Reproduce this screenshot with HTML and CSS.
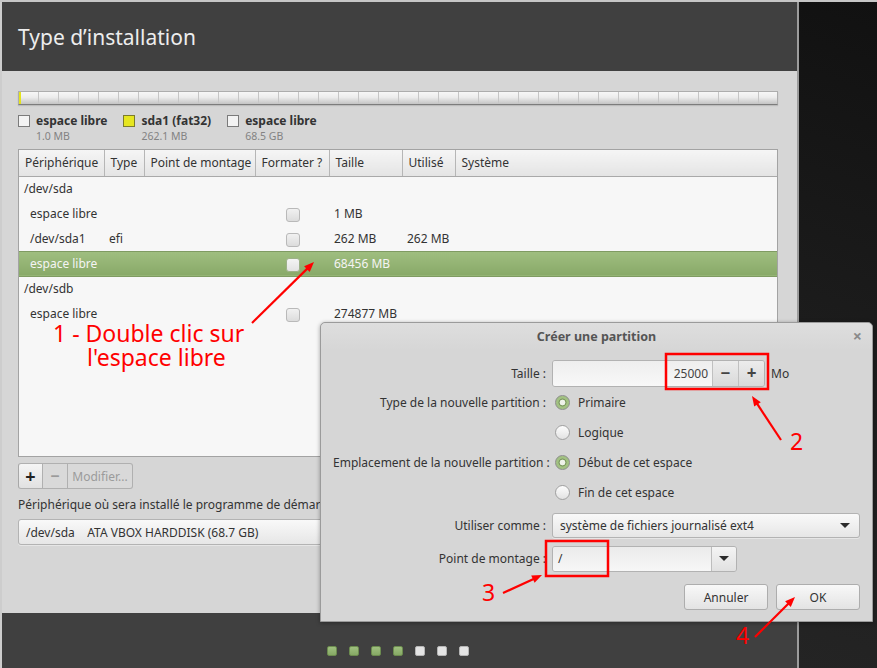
FILE: index.html
```html
<!DOCTYPE html>
<html lang="fr">
<head>
  <meta charset="UTF-8">
  <title>Type d'installation</title>
  <link rel="stylesheet" href="styles.css">
</head>
<body>
  <div class="screen">
    <div class="installer">
      <header class="top">
        <h1>Type d’installation</h1>
      </header>

      <main class="content">
        <div class="partbar"><span class="seg-fat"></span></div>

        <div class="legend">
          <div class="legend-item">
            <span class="swatch"></span>
            <div><b>espace libre</b><small>1.0 MB</small></div>
          </div>
          <div class="legend-item">
            <span class="swatch fat"></span>
            <div><b>sda1 (fat32)</b><small>262.1 MB</small></div>
          </div>
          <div class="legend-item">
            <span class="swatch"></span>
            <div><b>espace libre</b><small>68.5 GB</small></div>
          </div>
        </div>

        <div class="tree">
          <table>
            <colgroup>
              <col class="c-dev"><col class="c-type"><col class="c-mount"><col class="c-fmt">
              <col class="c-size"><col class="c-used"><col>
            </colgroup>
            <thead>
              <tr>
                <th>Périphérique</th><th>Type</th><th>Point de montage</th><th>Formater ?</th>
                <th>Taille</th><th>Utilisé</th><th>Système</th>
              </tr>
            </thead>
            <tbody>
              <tr class="disk"><td colspan="7">/dev/sda</td></tr>
              <tr>
                <td class="part">espace libre</td><td></td><td></td>
                <td class="fmt"><span class="check"></span></td><td>1 MB</td><td></td><td></td>
              </tr>
              <tr>
                <td class="part">/dev/sda1</td><td>efi</td><td></td>
                <td class="fmt"><span class="check"></span></td><td>262 MB</td><td>262 MB</td><td></td>
              </tr>
              <tr class="selected">
                <td class="part">espace libre</td><td></td><td></td>
                <td class="fmt"><span class="check"></span></td><td>68456 MB</td><td></td><td></td>
              </tr>
              <tr class="disk"><td colspan="7">/dev/sdb</td></tr>
              <tr>
                <td class="part">espace libre</td><td></td><td></td>
                <td class="fmt"><span class="check"></span></td><td>274877 MB</td><td></td><td></td>
              </tr>
            </tbody>
          </table>
        </div>

        <div class="tools">
          <button class="tool add">+</button><button class="tool minus" disabled>−</button><button class="tool edit" disabled>Modifier...</button>
        </div>

        <p class="boot-label">Périphérique où sera installé le programme de démarrage :</p>
        <div class="combo boot">
          <span class="combo-text">/dev/sda    ATA VBOX HARDDISK (68.7 GB)</span>
          <i class="caret"></i>
        </div>
      </main>

      <footer class="steps">
        <span class="dot done"></span>
        <span class="dot done"></span>
        <span class="dot done"></span>
        <span class="dot done"></span>
        <span class="dot"></span>
        <span class="dot"></span>
        <span class="dot"></span>
      </footer>
    </div>
    <div class="backdrop"></div>
  </div>

  <!-- floating dialog window -->
  <div class="dialog">
    <div class="dialog-title">
      <span>Créer une partition</span>
      <span class="close">×</span>
    </div>

    <div class="form">
      <div class="field f-size">
        <label>Taille :</label>
        <div class="spin">
          <span class="spin-value">25000</span>
          <span class="spin-btn">−</span>
          <span class="spin-btn">+</span>
        </div>
        <span class="unit">Mo</span>
      </div>
      <div class="field f-radio">
        <label>Type de la nouvelle partition :</label>
        <span class="radio on"></span><span>Primaire</span>
      </div>
      <div class="field f-radio">
        <label></label>
        <span class="radio"></span><span>Logique</span>
      </div>
      <div class="field f-radio">
        <label>Emplacement de la nouvelle partition :</label>
        <span class="radio on"></span><span>Début de cet espace</span>
      </div>
      <div class="field f-radio">
        <label></label>
        <span class="radio"></span><span>Fin de cet espace</span>
      </div>
      <div class="field f-use">
        <label>Utiliser comme :</label>
        <div class="combo use">
          <span class="combo-text">système de fichiers journalisé ext4</span>
          <i class="caret"></i>
        </div>
      </div>
      <div class="field f-mount">
        <label>Point de montage :</label>
        <div class="combo-entry">
          <span class="entry-text">/</span>
          <span class="entry-btn"><i class="caret"></i></span>
        </div>
      </div>
    </div>

    <div class="dialog-buttons">
      <button class="btn">Annuler</button>
      <button class="btn">OK</button>
    </div>
  </div>

  <!-- red tutorial annotations -->
  <svg class="notes" width="877" height="668" viewBox="0 0 877 668">
    <text x="53" y="342">1 - Double clic sur</text>
    <text x="87" y="366">l'espace libre</text>
    <line x1="252" y1="323" x2="308.3" y2="267.6"/>
    <polygon points="314,262 309.7,271.9 304.1,266.2"/>

    <rect x="666" y="354" width="102" height="35"/>
    <text x="790" y="450">2</text>
    <line x1="781" y1="440" x2="756.4" y2="402.7"/>
    <polygon points="752,396 760.8,402.2 754.2,406.6"/>

    <rect x="546" y="541" width="62" height="35"/>
    <text x="482" y="601">3</text>
    <line x1="503" y1="593" x2="534.7" y2="578.4"/>
    <polygon points="542,575 534.6,582.8 531.2,575.6"/>

    <text x="736" y="644">4</text>
    <line x1="755" y1="637" x2="789.3" y2="602.7"/>
    <polygon points="795,597 790.8,606.9 785.1,601.2"/>
  </svg>
</body>
</html>
```

FILE: styles.css
```css
* {
  box-sizing: border-box;
}
html, body {
  margin: 0;
  background: #1b1b1b;
}
body {
  width: 877px;
  height: 668px;
  overflow: hidden;
  position: relative;
  font-family: "Noto Sans", "DejaVu Sans", sans-serif;
  font-size: 12px;
  color: #333;
}

.screen {
  display: flex;
  height: 668px;
  border-top: 2px solid #c6c6c6;
}
.installer {
  width: 799px;
  display: flex;
  flex-direction: column;
  border-left: 2px solid #cdcdcd;
  border-right: 2px solid #9c9c9c;
}
.backdrop {
  flex: 1;
  background: linear-gradient(200deg, #111 0%, #1c1c1c 50%, #242424 100%);
}

/* header */
.top {
  height: 69px;
  background: #404040;
  padding: 23px 0 0 16px;
}
.top h1 {
  margin: 0;
  font-size: 21px;
  line-height: 24px;
  font-weight: normal;
  color: #ededed;
}

/* main panel */
.content {
  height: 542px;
  background: #d6d6d6;
  padding: 20px 19px 0 16px;
}

.partbar {
  display: flex;
  height: 14px;
  border: 1px solid #adadad;
  border-bottom-color: #7c7c7c;
  background:
    repeating-linear-gradient(to right, transparent 0 19px, #c6c6c6 19px 20px),
    linear-gradient(#f7f7f7, #ececec 45%, #d9d9d9 70%, #c4c4c4);
  box-shadow: 0 1px 1px rgba(0, 0, 0, 0.12);
}
.seg-fat {
  width: 2px;
  background: #e3e31c;
}

.legend {
  display: flex;
  gap: 16px;
  margin: 9px 0 7px;
}
.legend-item {
  display: flex;
  gap: 6px;
}
.swatch {
  width: 12px;
  height: 12px;
  margin-top: 1px;
  border: 1px solid #7b7b7b;
  background: #f3f3f3;
}
.swatch.fat {
  background: #e6e620;
  border-color: #7c7c2c;
}
.legend b {
  display: block;
  font-size: 12px;
  line-height: 14px;
  color: #333;
}
.legend small {
  display: block;
  margin-top: 2px;
  font-size: 10.5px;
  line-height: 12px;
  color: #838383;
}

/* partition tree */
.tree {
  height: 308px;
  border: 1px solid #a3a3a3;
  background: #f7f7f7;
}
.tree table {
  width: 100%;
  table-layout: fixed;
  border-collapse: collapse;
}
.c-dev { width: 85px; }
.c-type { width: 40px; }
.c-mount { width: 111px; }
.c-fmt { width: 74px; }
.c-size { width: 73px; }
.c-used { width: 53px; }

.tree th {
  height: 26px;
  padding: 0 6px;
  text-align: left;
  font-weight: normal;
  white-space: nowrap;
  background: linear-gradient(#f5f5f5, #e4e4e4);
  border-right: 1px solid #b6b6b6;
  border-bottom: 1px solid #a9a9a9;
}
.tree th:last-child {
  border-right: none;
}
.tree td {
  height: 25px;
  padding: 0 5px;
  white-space: nowrap;
}
.tree td.part {
  padding-left: 11px;
}
.tree tr.disk td {
  padding-left: 5px;
}
.tree td.fmt {
  text-align: center;
  padding: 0 0 0 2px;
}
.check {
  display: inline-block;
  width: 14px;
  height: 14px;
  vertical-align: middle;
  border: 1px solid #b9b9b9;
  border-radius: 3px;
  background: linear-gradient(#f1f1f1, #dcdcdc);
}
.tree tr.selected td {
  color: #f4f4f4;
  background: linear-gradient(#9fbe80, #88a968);
  border-top: 1px solid #7f9b62;
  border-bottom: 1px solid #7f9b62;
}
.tree tr.selected .check {
  border-color: #9db188;
  background: linear-gradient(#f4f4f4, #e2e2e2);
}

/* buttons under tree */
.tools {
  display: flex;
  margin-top: 6px;
}
.tool {
  height: 26px;
  margin: 0;
  padding: 0;
  font-family: inherit;
  font-size: 12px;
  color: #9b9b9b;
  background: #d9d9d9;
  border: 1px solid #b0b0b0;
  border-left: none;
}
.tool.add {
  width: 25px;
  border-left: 1px solid #a8a8a8;
  border-radius: 3px 0 0 3px;
  color: #222;
  font-size: 18px;
  font-weight: bold;
  line-height: 1;
  background: linear-gradient(#f5f5f5, #e1e1e1);
}
.tool.minus {
  width: 25px;
  font-size: 16px;
  font-weight: bold;
}
.tool.edit {
  width: 65px;
  border-radius: 0 3px 3px 0;
}

.boot-label {
  margin: 8px 0 0;
  line-height: 16px;
  white-space: nowrap;
}

.combo {
  display: flex;
  align-items: center;
  justify-content: space-between;
  height: 26px;
  padding: 0 11px 0 7px;
  border: 1px solid #b3b3b3;
  border-radius: 3px;
  background: linear-gradient(#f9f9f9, #e6e6e6);
  box-shadow: 0 1px 0 rgba(255, 255, 255, 0.4);
}
.combo-text {
  white-space: pre;
}
.combo.boot {
  margin-top: 6px;
}
.caret {
  width: 0;
  height: 0;
  border-left: 5px solid transparent;
  border-right: 5px solid transparent;
  border-top: 5px solid #2c2c2c;
}

/* step dots */
.steps {
  flex: 1;
  display: flex;
  justify-content: center;
  gap: 12px;
  padding: 33px 3px 0 0;
  background: #404040;
}
.dot {
  width: 10px;
  height: 10px;
  border-radius: 2px;
  background: #e4e4e4;
  border: 1px solid #b5b5b5;
}
.dot.done {
  background: linear-gradient(#9fc07f, #86a965);
  border-color: #6c8c4f;
}

/* dialog */
.dialog {
  position: absolute;
  left: 320px;
  top: 322px;
  width: 553px;
  height: 300px;
  background: #d6d6d6;
  border: 1px solid #9b9b9b;
  border-radius: 5px 5px 0 0;
  box-shadow: 0 1px 4px rgba(0, 0, 0, 0.35);
  padding: 0 12px;
}
.dialog-title {
  position: relative;
  height: 27px;
  margin: 0 -12px;
  display: flex;
  align-items: center;
  justify-content: center;
  font-weight: bold;
  font-size: 12.5px;
  color: #555;
  border-radius: 5px 5px 0 0;
  background: linear-gradient(#dedede, #d6d6d6);
}
.close {
  position: absolute;
  right: 10px;
  top: 5px;
  font-size: 16px;
  line-height: 16px;
  color: #8a8a8a;
}

.form {
  margin-top: 10px;
}
.field {
  display: flex;
  align-items: center;
  height: 30px;
}
.field label {
  width: 213px;
  flex: none;
  margin-right: 6px;
  text-align: right;
  white-space: nowrap;
  color: #333;
}
.f-size { height: 27px; }
.f-use { height: 36px; }
.f-mount { height: 31px; }

.spin {
  display: flex;
  width: 213px;
  height: 27px;
  border: 1px solid #b2b2b2;
  border-radius: 3px;
  overflow: hidden;
}
.spin-value {
  flex: 1;
  text-align: right;
  padding-right: 4px;
  line-height: 25px;
  color: #444;
  background: linear-gradient(#eeeeee, #f8f8f8);
}
.spin-btn {
  width: 26px;
  text-align: center;
  line-height: 24px;
  font-size: 17px;
  font-weight: bold;
  color: #444;
  border-left: 1px solid #c0c0c0;
  background: linear-gradient(#ececec, #d9d9d9);
}
.unit {
  margin-left: 6px;
}

.radio {
  width: 15px;
  height: 15px;
  margin: 0 8px 0 3px;
  border-radius: 50%;
  border: 1px solid #a0a0a0;
  background: linear-gradient(#fdfdfd, #e2e2e2);
}
.radio.on {
  border-color: #8d8d8d;
  background: radial-gradient(circle, #eef2ea 0 2.6px, #7e9b61 3.2px 3.8px, #a2c182 4.3px);
}

.combo.use {
  width: 308px;
  height: 25px;
  padding-right: 9px;
}
.combo-entry {
  display: flex;
  width: 185px;
  height: 26px;
  border: 1px solid #b2b2b2;
  border-radius: 3px;
  overflow: hidden;
}
.entry-text {
  flex: 1;
  padding-left: 5px;
  line-height: 24px;
  background: linear-gradient(#ebebeb, #f7f7f7);
}
.entry-btn {
  width: 25px;
  display: flex;
  align-items: center;
  justify-content: center;
  border-left: 1px solid #bdbdbd;
  background: linear-gradient(#f4f4f4, #e1e1e1);
}

.dialog-buttons {
  display: flex;
  justify-content: flex-end;
  gap: 8px;
  margin-top: 10px;
}
.btn {
  width: 84px;
  height: 26px;
  font-family: inherit;
  font-size: 12px;
  color: #333;
  border: 1px solid #adadad;
  border-radius: 3px;
  background: linear-gradient(#f8f8f8, #e3e3e3);
}

/* annotations */
.notes {
  position: absolute;
  left: 0;
  top: 0;
  pointer-events: none;
}
.notes text {
  font-family: "Noto Sans", "DejaVu Sans", sans-serif;
  font-size: 23px;
  fill: #ff0000;
}
.notes line {
  stroke: #ff0000;
  stroke-width: 2.2;
}
.notes polygon {
  fill: #ff0000;
}
.notes rect {
  fill: none;
  stroke: #ff0000;
  stroke-width: 2.5;
}
```
